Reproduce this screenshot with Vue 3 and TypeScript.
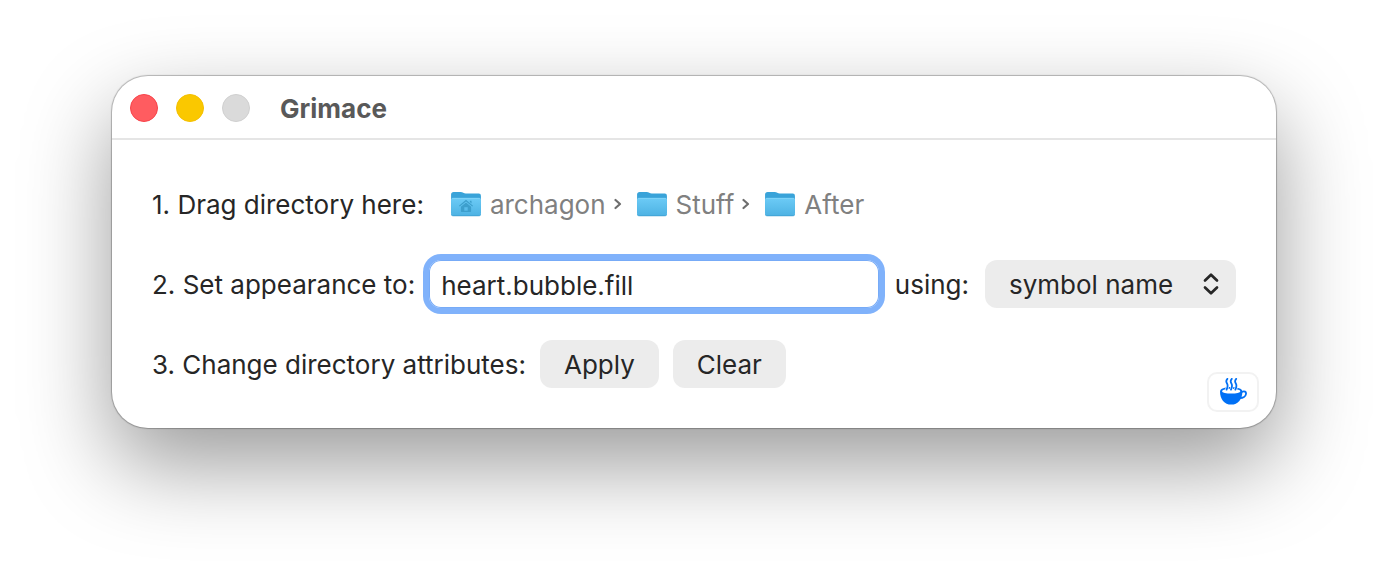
<script setup lang="ts">
import { ref } from 'vue'

interface Crumb {
  name: string
  home: boolean
}

const crumbs: Crumb[] = [
  { name: 'archagon', home: true },
  { name: 'Stuff', home: false },
  { name: 'After', home: false },
]
const modes: string[] = ['symbol name', 'emoji', 'image']
const steamOffsets: number[] = [0, 4.4, 8.8]

const appearance = ref('heart.bubble.fill')
const mode = ref('symbol name')

function clear(): void {
  appearance.value = ''
}
</script>

<template>
  <main class="desktop">
    <section class="window">
      <header class="titlebar">
        <button class="light close" type="button" aria-label="Close"></button>
        <button class="light minimize" type="button" aria-label="Minimize"></button>
        <button class="light zoom" type="button" aria-label="Zoom" disabled></button>
        <h1>Grimace</h1>
      </header>

      <form class="steps" @submit.prevent>
        <div class="row">
          <span class="caption">1. Drag directory here:</span>
          <ol class="path">
            <li v-for="(crumb, i) in crumbs" :key="crumb.name">
              <svg class="folder" viewBox="1 0 30 28" preserveAspectRatio="none" aria-hidden="true">
                <defs>
                  <linearGradient :id="`front-${i}`" x1="0" y1="0" x2="0" y2="1">
                    <stop offset="0" stop-color="#6ccbf6" />
                    <stop offset="1" stop-color="#4db2e3" />
                  </linearGradient>
                </defs>
                <path d="M2 4.5Q2 2 4.5 2H11Q12.4 2 13.4 2.8Q14.4 3.6 15.8 3.6H28Q30 3.6 30 5.8V23H2Z" fill="#39a3d9" />
                <path d="M2 9.6Q2 8 3.8 8H28.2Q30 8 30 9.6V24.2Q30 26 28.2 26H3.8Q2 26 2 24.2Z" :fill="`url(#front-${i})`" />
                <path d="M2.6 8.9Q3 8.3 4 8.3H28Q29 8.3 29.4 8.9" fill="none" stroke="#8cdafb" stroke-width="0.7" />
                <path d="M2.4 25.2Q3 25.8 4 25.8H28Q29 25.8 29.6 25.2" fill="none" stroke="#3c9dce" stroke-width="0.7" />
                <path
                  v-if="crumb.home"
                  d="M16 9.8L22.6 15.7L21.9 16.6L16 11.4L10.1 16.6L9.4 15.7ZM19.6 10.7H21.2V13.5L19.6 12.1ZM16 12.5L20.8 16.7V21.2Q20.8 22 20 22H12Q11.2 22 11.2 21.2V16.7ZM14.4 17.2V20.7H17.6V17.2Z"
                  fill="#3d9fcd"
                  fill-rule="evenodd"
                />
              </svg>
              <span class="caption">{{ crumb.name }}</span>
              <svg v-if="i < crumbs.length - 1" class="next" viewBox="0 0 8 12" aria-hidden="true">
                <path d="M1.5 2L6 6L1.5 10" />
              </svg>
            </li>
          </ol>
        </div>

        <div class="row">
          <label class="caption" for="appearance">2. Set appearance to:</label>
          <input id="appearance" v-model="appearance" class="field" type="text" spellcheck="false" />
          <label class="caption using" for="mode">using:</label>
          <div class="popup">
            <select id="mode" v-model="mode">
              <option v-for="m in modes" :key="m" :value="m">{{ m }}</option>
            </select>
            <svg viewBox="0 0 18 24" aria-hidden="true">
              <path d="M3 8.5L9 2.7L15 8.5M3 15.5L9 21.3L15 15.5" />
            </svg>
          </div>
        </div>

        <div class="row">
          <span class="caption">3. Change directory attributes:</span>
          <button class="push" type="submit">Apply</button>
          <button class="push" type="button" @click="clear">Clear</button>
        </div>
      </form>

      <a class="coffee" href="#coffee" aria-label="Buy me a coffee">
        <svg viewBox="0 0 28 28" aria-hidden="true">
          <path d="M1 13.4C1 10.6 6 9 12 9S23.4 10.6 23.4 13.4C23.4 21 19 26.6 12.2 26.6S1 21 1 13.4Z" fill="#0070f5" />
          <ellipse cx="12.2" cy="13.2" rx="9.2" ry="2.4" fill="#fff" />
          <path d="M22.8 13.8C25.6 12.6 27.3 13.8 27 15.9C26.7 18.5 24 20.1 20.8 20" class="line" />
          <g class="steam-gap">
            <path v-for="x in steamOffsets" :key="x" :transform="`translate(${x} 0)`" d="M8.4 .8C6.4 3 7.1 4.1 8 5.5C9.2 7.4 9 8.6 7.6 11.6" />
          </g>
          <g class="line">
            <path v-for="x in steamOffsets" :key="x" :transform="`translate(${x} 0)`" d="M8.4 .8C6.4 3 7.1 4.1 8 5.5C9.2 7.4 9 8.6 7.6 11.6" />
          </g>
        </svg>
      </a>
    </section>
  </main>
</template>

<style>
body {
  margin: 0;
  background: #fff;
}
</style>

<style scoped>
.desktop {
  box-sizing: border-box;
  min-height: 100vh;
  padding: 76px 112px;
  font-family: Inter, "Liberation Sans", sans-serif;
  font-size: 26px;
  line-height: 32px;
  color: #262626;
}
.window {
  position: relative;
  border-radius: 36px;
  background: #fff;
  box-shadow: 0 0 1px 1px rgba(0, 0, 0, 0.26), 0 36px 88px rgba(0, 0, 0, 0.4);
}
.titlebar {
  display: flex;
  align-items: center;
  gap: 18px;
  box-sizing: border-box;
  height: 64px;
  padding: 2px 18px 0;
  border-bottom: 2px solid #e5e5e5;
}
.light {
  width: 28px;
  height: 28px;
  padding: 0;
  border: 1px solid;
  border-radius: 50%;
}
.close {
  border-color: #f8434a;
  background: #ff5c60;
}
.minimize {
  border-color: #f5c000;
  background: #fac800;
}
.zoom {
  border-color: #d0d0d0;
  background: #dadada;
}
h1 {
  margin: 0 0 0 12px;
  padding-top: 2px;
  font-size: 26px;
  font-weight: 700;
  color: #595959;
}
.steps {
  display: flex;
  flex-direction: column;
  gap: 32px;
  padding: 40px;
}
.row {
  display: flex;
  align-items: center;
  gap: 14px;
  height: 48px;
  white-space: nowrap;
}
.caption {
  padding-top: 2px;
}
.using {
  margin: 0 2px;
}
.path {
  display: flex;
  gap: 14px;
  margin: 0 0 0 12px;
  padding: 0;
  list-style: none;
  color: #808080;
}
.path li {
  display: flex;
  align-items: center;
  gap: 8px;
}
.folder {
  width: 32px;
  height: 28px;
}
.next {
  width: 8px;
  height: 12px;
}
.next path {
  fill: none;
  stroke: #6e6e6e;
  stroke-width: 2.2;
  stroke-linecap: round;
  stroke-linejoin: round;
}
.field {
  flex: 1;
  box-sizing: border-box;
  min-width: 0;
  height: 48px;
  padding: 2px 12px 0;
  border: 0;
  border-radius: 12px;
  outline: none;
  background: #fff;
  box-shadow: 0 0 0 6px #80b2fb, inset 0 0 0 1px #77abf7;
  color: inherit;
  font: inherit;
}
.popup {
  position: relative;
}
.popup select {
  width: 251px;
  height: 48px;
  padding: 2px 24px 0;
  border: 0;
  border-radius: 12px;
  appearance: none;
  background: #ececec;
  color: inherit;
  font: inherit;
}
.popup svg {
  position: absolute;
  top: 12px;
  right: 16px;
  width: 18px;
  height: 24px;
  pointer-events: none;
}
.popup path {
  fill: none;
  stroke: #262626;
  stroke-width: 2.7;
  stroke-linecap: round;
  stroke-linejoin: round;
}
.push {
  height: 48px;
  padding: 2px 24px 0;
  border: 0;
  border-radius: 12px;
  background: #ececec;
  color: inherit;
  font: inherit;
}
.coffee {
  position: absolute;
  right: 17px;
  bottom: 16px;
  display: grid;
  place-items: center;
  box-sizing: border-box;
  width: 52px;
  height: 40px;
  border: 2px solid #f2f2f2;
  border-radius: 10px;
}
.coffee svg {
  width: 28px;
  height: 28px;
}
.line,
.steam-gap {
  fill: none;
  stroke: #0070f5;
  stroke-width: 1.8;
  stroke-linecap: round;
}
.steam-gap {
  stroke: #fff;
  stroke-width: 3;
}
</style>
